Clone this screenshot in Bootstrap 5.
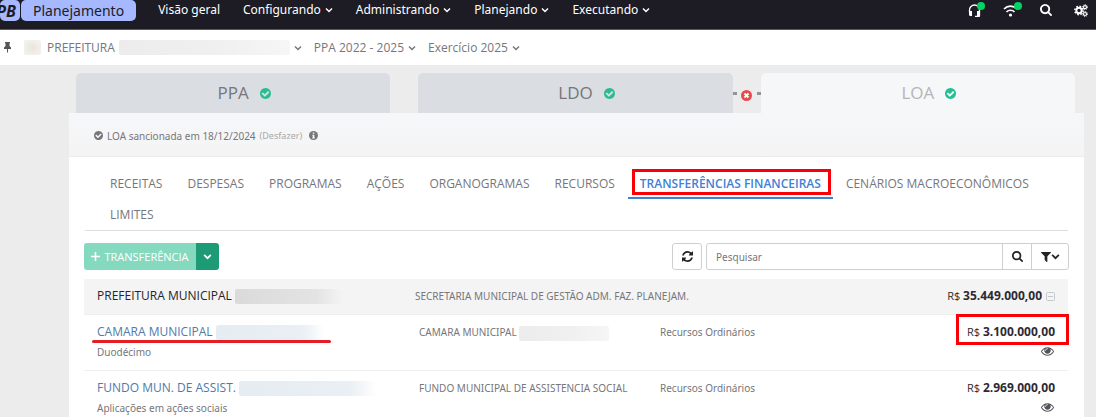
<!DOCTYPE html>
<html lang="pt-BR">
<head>
<meta charset="utf-8">
<meta name="viewport" content="width=device-width, initial-scale=1">
<title>Planejamento - Transferências financeiras</title>
<link href="https://cdn.jsdelivr.net/npm/bootstrap@5.3.0/dist/css/bootstrap.min.css" rel="stylesheet">
<style>
body{font-family:"Open Sans","Noto Sans",sans-serif;font-size:12px;line-height:20px;color:#76767b;background:#ececec;overflow:hidden}
a{text-decoration:none;color:inherit}
svg{display:block;fill:currentColor;flex:none}
.topbar{height:30px;background:#1d1b23;border-bottom:1px solid #5c5862;color:#fff;padding-right:8px}
.brandbox{height:21px;background:#a6b8ff;color:#1d1b23;border-radius:5px;font-size:16px}
.brandbox.logo{width:20px;font-weight:700;font-style:italic;justify-content:flex-end;padding-right:4px;margin-right:1px;overflow:hidden}
.brandbox.product{padding:0 12px;font-family:"Noto Sans",sans-serif;font-size:14px}
.mainmenu{font-family:"Noto Sans",sans-serif;font-size:12px;gap:23px;margin-left:22px;height:20px}
.chev{fill:none;stroke:currentColor;stroke-width:1.5}
.tools{gap:22px;height:20px}
.dot{position:absolute;top:-2px;right:-4px;width:8px;height:8px;border-radius:50%;background:#00d563}
.context{height:35px;background:#fff;padding-left:3px}
.pin{color:#555}
.smudge{display:inline-block;vertical-align:middle;height:15px;border-radius:2px;background:linear-gradient(90deg,#ececec,#f0f0f0 60%,#f6f6f6)}
.smudge.darker{background:linear-gradient(90deg,#dadada,#e3e3e3 75%,#f4f4f4)}
.smudge.bluish{background:linear-gradient(90deg,#e6edf2,#e9eff4 80%,#fff)}
.smudge.crest{width:17px;margin:0 6px 0 12px;background:radial-gradient(#ece4d8,#f0f0ee 70%)}
.w-entity{width:171px}.w-head{width:108px}.w-row{width:108px}.w-long{width:138px}.w-unit{width:90px}
.workspace{margin:8px 12px 0 69px}
.stages{padding:0 9px 0 7px}
.stage{flex:1 1 0;height:40px;border-radius:5px 5px 0 0;background:#dadde1;font-size:17px;gap:11px;padding-left:22px}
.stage.current{background:#f6f7f9;color:#b5b5b7}
.stage svg{color:#26bf94}
.between{width:28px}
.between i{width:4px;height:3px;background:#96929c}
.between svg{color:#e94b4b;margin-top:5px}
.sheet{background:#fff}
.notice{height:44px;border-bottom:1px solid #ececee;background:linear-gradient(#f6f7f9,#f4f4f4);padding:2px 25px 0}
.notice,.ledger{font-family:"Noto Sans",sans-serif;font-size:10px}
.undo{font-size:9px;color:#a9a9ab;margin:0 7px 0 4px}
.sections{margin:12px 16px 12px;padding:0 13px;row-gap:1px;border-bottom:1px solid #dedede}
.sections a{position:relative;height:30px;line-height:30px;padding:0 12px;border-bottom:2px solid transparent;margin-right:1px;white-space:nowrap}
.sections a.active{color:#3f7fd6;border-color:#3f7fd6;font-weight:600}
.redbox{position:absolute;border:3px solid #f90008;pointer-events:none}
.sections .redbox{inset:0 2px 2px 4px}
.controls{padding:0 15px 9px}
.btn-tool{height:27px;font-size:11px;line-height:18px;padding:0;border-radius:3px;display:flex;align-items:center;justify-content:center}
.add{width:112px;background:#84d9bf;color:#fff;border-radius:3px 0 0 3px}
.more{width:23px;background:#1d9b76;color:#fff;border-radius:0 3px 3px 0}
.plain{background:#fff;border:1px solid #cfcfcf;color:#222}
.reload{width:30px}
.searchgroup{width:363px;margin-left:4px}
.searchgroup .form-control{height:27px;font-family:"Noto Sans",sans-serif;font-size:10px;padding:2px 9px;border-color:#cfcfcf;border-radius:3px}
.searchgroup .form-control::placeholder{color:#76767b}
.go{width:30px}.filters{width:38px}
.ledgerwrap{padding:0 16px 0 15px}
.ledger{table-layout:fixed;width:100%;border-collapse:separate;border-spacing:0}
.ledger td{vertical-align:top;padding:7px 0 0 13px;height:56px;border-bottom:1px solid #eeeeef;white-space:nowrap;line-height:20px}
.ledger .group td{height:36px;background:#f4f4f4;color:#76767b}
.ledger td.amount{position:relative;text-align:right;padding-right:13px;font-family:"Open Sans",sans-serif;font-size:11px}
.ledger td.amount,.ledger .group td.amount{color:#2d2a33}
.ledger .unit{padding-left:17px}
.ledger .group .unit{padding-left:13px}
.ledger .title{font-family:"Open Sans",sans-serif;font-size:12px;color:#4f7aa8}
.ledger .group .title{color:#26242c}
.ledger b{font-size:12px}
.ledger .redbox{inset:-1px -1px 25px auto;width:113px}
.view{padding:5px 1px 0 0;color:#55535a}
.collapse-mark{fill:none;stroke:#c4c9cb}
.underlined{position:relative}
.underlined::after{content:"";position:absolute;left:-5px;right:-7px;bottom:-3px;height:3px;border-radius:2px;background:#e31e24}
.col-name{width:318px}.col-unit{width:245px}.col-source{width:150px}
</style>
</head>
<body>
<svg class="d-none" aria-hidden="true">
<symbol id="chevron" viewBox="0 0 8 8"><path d="M1 2.500 4 5.500 7 2.500"/></symbol>
<symbol id="check" viewBox="128 128 1536 1536"><path d="M1412 734q0-28-18-46l-91-90q-19-19-45-19t-45 19l-408 407-226-226q-19-19-45-19t-45 19l-91 90q-18 18-18 46 0 27 18 45l362 362q19 19 45 19 27 0 46-19l543-543q18-18 18-45zm252 162q0 209-103 385.500t-279.500 279.500-385.500 103-385.500-103-279.500-279.500-103-385.500 103-385.500 279.500-279.500 385.500-103 385.500 103 279.500 279.500 103 385.500z"/></symbol>
<symbol id="search" viewBox="64 128 1664 1664"><path d="M1216 832q0-185-131.500-316.500t-316.500-131.500-316.500 131.500-131.500 316.500 131.500 316.500 316.500 131.500 316.500-131.500 131.500-316.500zm512 832q0 52-38 90t-90 38q-54 0-90-38l-343-342q-179 124-399 124-143 0-273.500-55.500t-225-150-150-225-55.500-273.500 55.500-273.500 150-225 225-150 273.500-55.500 273.500 55.500 225 150 150 225 55.500 273.500q0 220-124 399l343 343q37 37 37 90z"/></symbol>
<symbol id="refresh" viewBox="128 128 1536 1536"><path d="M1639 1056q0 5-1 7-64 268-268 434.500t-478 166.500q-146 0-282.500-55t-243.500-157l-129 129q-19 19-45 19t-45-19-19-45v-448q0-26 19-45t45-19h448q26 0 45 19t19 45-19 45l-137 137q71 66 161 102t187 36q134 0 250-65t186-179q11-17 53-117 8-23 30-23h192q13 0 22.500 9.500t9.500 22.500zm25-800v448q0 26-19 45t-45 19h-448q-26 0-45-19t-19-45 19-45l138-138q-148-137-349-137-134 0-250 65t-186 179q-11 17-53 117-8 23-30 23h-199q-13 0-22.500-9.500t-9.500-22.500v-7q65-268 270-434.500t480-166.500q146 0 284 55.500t245 156.500l130-129q19-19 45-19t45 19 19 45z"/></symbol>
<symbol id="filter" viewBox="190 250 1412 1412"><path d="M1595 295q17 41-14 70l-493 493v742q0 42-39 59-13 5-25 5-27 0-45-19l-256-256q-19-19-19-45v-486l-493-493q-31-29-14-70 17-39 59-39h1280q42 0 59 39z"/></symbol>
<symbol id="eye" viewBox="0 384 1792 1152"><path d="M1664 960q-152-236-381-353 61 104 61 225 0 185-131.500 316.500t-316.500 131.500-316.500-131.500-131.500-316.500q0-121 61-225-229 117-381 353 133 205 333.500 326.500t434.500 121.500 434.500-121.500 333.500-326.500zm-720-384q0-20-14-34t-34-14q-125 0-214.500 89.500t-89.500 214.500q0 20 14 34t34 14 34-14 14-34q0-86 61-147t147-61q20 0 34-14t14-34zm848 384q0 34-20 69-140 230-376.500 368.500t-499.500 138.500-499.500-139-376.500-368q-20-35-20-69t20-69q140-229 376.500-368t499.500-139 499.500 139 376.500 368q20 35 20 69z"/></symbol>
</svg>

<header class="topbar d-flex align-items-start">
  <span class="brandbox logo d-flex align-items-center">PB</span>
  <a href="#" class="brandbox product d-flex align-items-center">Planejamento</a>
  <nav class="mainmenu d-flex align-items-center text-nowrap" aria-label="Principal">
    <a href="#">Visão geral</a>
    <a href="#" class="d-flex align-items-center gap-1">Configurando <svg class="chev" width="8" height="8"><use href="#chevron"/></svg></a>
    <a href="#" class="d-flex align-items-center gap-1">Administrando <svg class="chev" width="8" height="8"><use href="#chevron"/></svg></a>
    <a href="#" class="d-flex align-items-center gap-1">Planejando <svg class="chev" width="8" height="8"><use href="#chevron"/></svg></a>
    <a href="#" class="d-flex align-items-center gap-1">Executando <svg class="chev" width="8" height="8"><use href="#chevron"/></svg></a>
  </nav>
  <div class="tools d-flex align-items-center ms-auto">
    <a href="#" class="position-relative" aria-label="Suporte"><svg width="13" height="13" viewBox="0 0 13 13"><path d="M1.500 8V6a5 5 0 0 1 10 0v5.500a1 1 0 0 1-1 1H7" fill="none" stroke="#fff" stroke-width="1.300"/><path d="M1 7h3v5H2.500A1.500 1.500 0 0 1 1 10.500zM9 7h3v3.500a1.500 1.500 0 0 1-1.500 1.500H9z"/></svg><span class="dot"></span></a>
    <a href="#" class="position-relative" aria-label="Conexão"><svg width="15" height="13" viewBox="0 0 15 13"><path d="M1 5a9 9 0 0 1 13 0M3.500 8a5.500 5.500 0 0 1 8 0" fill="none" stroke="#fff" stroke-width="1.700"/><circle cx="7.500" cy="11" r="1.600"/></svg><span class="dot"></span></a>
    <a href="#" aria-label="Buscar"><svg width="12" height="12"><use href="#search"/></svg></a>
    <a href="#" aria-label="Configurações"><svg width="14" height="13" viewBox="0 0 14 13"><circle cx="5" cy="6.500" r="2.700" fill="none" stroke="#fff" stroke-width="2"/><circle cx="5" cy="6.500" r="4.200" fill="none" stroke="#fff" stroke-width="1.500" stroke-dasharray="1.700 1.600"/><g fill="none" stroke="#fff"><circle cx="11" cy="3.200" r="1.500" stroke-width="1.200"/><circle cx="11" cy="3.200" r="2.500" stroke-dasharray="1 .96"/><circle cx="11" cy="10" r="1.500" stroke-width="1.200"/><circle cx="11" cy="10" r="2.500" stroke-dasharray="1 .96"/></g></svg></a>
  </div>
</header>

<div class="context d-flex align-items-center text-nowrap">
  <svg class="pin" width="9" height="11" viewBox="0 0 9 11"><path d="M2 0h5v1L6.500 1.500V4L8 5.500V7H5v3l-.5 1L4 10V7H1V5.500L2.500 4V1.500L2 1z"/></svg>
  <span class="smudge crest"></span>
  <a href="#" class="d-flex align-items-center gap-1">PREFEITURA <span class="smudge w-entity"></span><svg class="chev" width="8" height="8"><use href="#chevron"/></svg></a>
  <a href="#" class="d-flex align-items-center gap-1 ms-2 ps-1">PPA 2022 - 2025 <svg class="chev" width="8" height="8"><use href="#chevron"/></svg></a>
  <a href="#" class="d-flex align-items-center gap-1 ms-2 ps-1">Exercício 2025 <svg class="chev" width="8" height="8"><use href="#chevron"/></svg></a>
</div>

<main class="workspace">
  <div class="stages d-flex">
    <a href="#" class="stage d-flex align-items-center justify-content-center">PPA <svg width="11" height="11"><use href="#check"/></svg></a>
    <span class="between"></span>
    <a href="#" class="stage d-flex align-items-center justify-content-center">LDO <svg width="11" height="11"><use href="#check"/></svg></a>
    <span class="between d-flex align-items-center justify-content-between"><i></i><svg width="11" height="11" viewBox="0 0 11 11"><circle cx="5.500" cy="5.500" r="5.500"/><path d="m3.500 3.500 4 4m0-4-4 4" stroke="#fff" stroke-width="1.800"/></svg><i></i></span>
    <a href="#" class="stage current d-flex align-items-center justify-content-center">LOA <svg width="11" height="11"><use href="#check"/></svg></a>
  </div>
  <section class="sheet">
    <div class="notice d-flex align-items-center text-nowrap">
      <svg width="9" height="9" class="me-1"><use href="#check"/></svg>LOA sancionada em 18/12/2024
      <a href="#" class="undo">(Desfazer)</a>
      <svg width="9" height="9" viewBox="0 0 9 9"><circle cx="4.500" cy="4.500" r="4.500"/><path d="M3.800 1.500h1.500v1.300H3.800zM3.300 3.700h2v2.900h.5v.9H3.200v-.9h.6v-2h-.5z" fill="#fff"/></svg>
    </div>
    <nav class="sections d-flex flex-wrap" aria-label="Seções">
      <a href="#">RECEITAS</a><a href="#">DESPESAS</a><a href="#">PROGRAMAS</a><a href="#">AÇÕES</a><a href="#">ORGANOGRAMAS</a><a href="#">RECURSOS</a><a href="#" class="active" aria-current="page">TRANSFERÊNCIAS FINANCEIRAS<span class="redbox"></span></a><a href="#">CENÁRIOS MACROECONÔMICOS</a><a href="#">LIMITES</a>
    </nav>
    <div class="controls d-flex">
      <button type="button" class="btn btn-tool add border-0"><svg width="9" height="9" viewBox="0 0 9 9" class="me-1"><path d="M0 4.500h9M4.500 0v9" stroke="#fff" stroke-width="1.600"/></svg>TRANSFERÊNCIA</button>
      <button type="button" class="btn btn-tool more border-0" aria-label="Mais opções"><svg class="chev" width="9" height="9"><use href="#chevron"/></svg></button>
      <button type="button" class="btn btn-tool plain reload ms-auto" aria-label="Atualizar"><svg width="11" height="11"><use href="#refresh"/></svg></button>
      <div class="input-group flex-nowrap searchgroup">
        <input type="text" class="form-control" placeholder="Pesquisar" aria-label="Pesquisar">
        <button type="button" class="btn btn-tool plain go" aria-label="Pesquisar"><svg width="11" height="11"><use href="#search"/></svg></button>
        <button type="button" class="btn btn-tool plain filters" aria-label="Filtros"><svg width="10" height="10"><use href="#filter"/></svg><svg class="chev" width="9" height="9"><use href="#chevron"/></svg></button>
      </div>
    </div>
    <div class="ledgerwrap">
      <table class="ledger">
        <colgroup><col class="col-name"><col class="col-unit"><col class="col-source"><col></colgroup>
        <tbody>
          <tr class="group">
            <td><span class="title">PREFEITURA MUNICIPAL <span class="smudge darker w-head"></span></span></td>
            <td class="unit" colspan="2">SECRETARIA MUNICIPAL DE GESTÃO ADM. FAZ. PLANEJAM.</td>
            <td class="amount"><div class="d-flex align-items-center justify-content-end gap-1"><span>R$ <b>35.449.000,00</b></span><svg class="collapse-mark" width="9" height="9" viewBox="0 0 9 9"><rect x=".5" y=".5" width="8" height="8" rx="1"/><path d="M2 4.500h5"/></svg></div></td>
          </tr>
          <tr>
            <td><a href="#" class="title underlined">CAMARA MUNICIPAL <span class="smudge bluish w-row"></span></a><div>Duodécimo</div></td>
            <td class="unit">CAMARA MUNICIPAL <span class="smudge w-unit"></span></td>
            <td>Recursos Ordinários</td>
            <td class="amount">R$ <b>3.100.000,00</b><span class="redbox"></span><div class="d-flex justify-content-end"><a href="#" class="view" aria-label="Visualizar"><svg width="13" height="9"><use href="#eye"/></svg></a></div></td>
          </tr>
          <tr>
            <td><a href="#" class="title">FUNDO MUN. DE ASSIST. <span class="smudge bluish w-long"></span></a><div>Aplicações em ações sociais</div></td>
            <td class="unit">FUNDO MUNICIPAL DE ASSISTENCIA SOCIAL</td>
            <td>Recursos Ordinários</td>
            <td class="amount">R$ <b>2.969.000,00</b><div class="d-flex justify-content-end"><a href="#" class="view" aria-label="Visualizar"><svg width="13" height="9"><use href="#eye"/></svg></a></div></td>
          </tr>
        </tbody>
      </table>
    </div>
  </section>
</main>
<script src="https://cdn.jsdelivr.net/npm/bootstrap@5.3.0/dist/js/bootstrap.bundle.min.js"></script>
</body>
</html>
